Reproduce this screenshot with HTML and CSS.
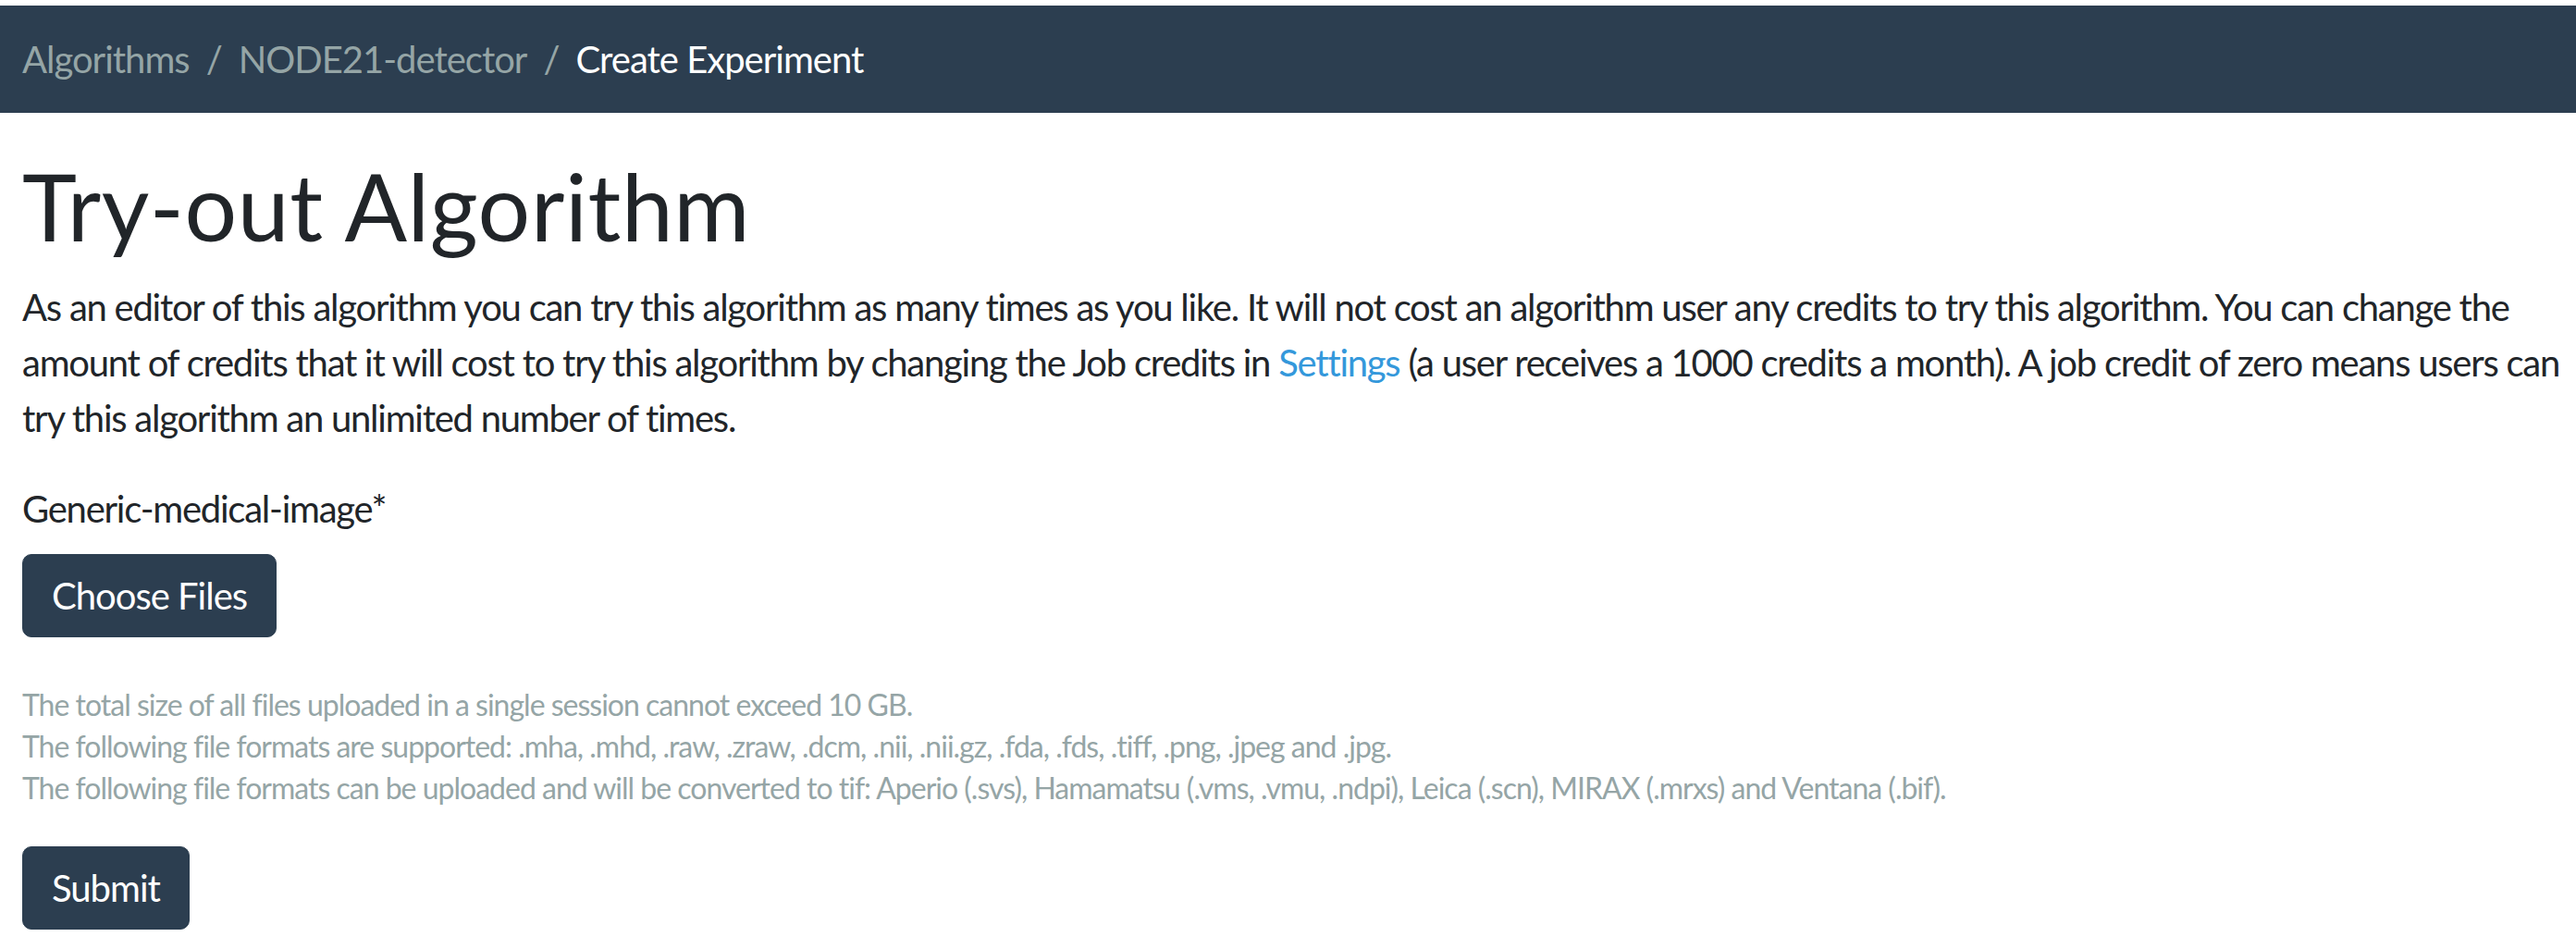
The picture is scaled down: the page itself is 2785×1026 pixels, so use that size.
FILE: index.html
```html
<!DOCTYPE html>
<html lang="en">
<head>
<meta charset="utf-8">
<title>Create Experiment</title>
<link rel="stylesheet" href="styles.css">
</head>
<body>
<nav class="breadcrumb-bar">
  <ol class="breadcrumb">
    <li class="crumb"><a href="#">Algorithms</a></li>
    <li class="crumb"><a href="#">NODE21-detector</a></li>
    <li class="crumb active">Create Experiment</li>
  </ol>
</nav>
<main class="container">
  <h1 class="title">Try-out Algorithm</h1>
  <p class="lead-text">As an editor of this algorithm you can try this algorithm as many times as you like. It will not cost an algorithm user any credits to try this algorithm. You can change the amount of credits that it will cost to try this algorithm by changing the Job credits in <a class="link" href="#">Settings</a> (a user receives a 1000 credits a month). A job credit of zero means users can try this algorithm an unlimited number of times.</p>
  <form class="form">
    <div class="field">
      <label class="label">Generic-medical-image*</label>
      <div><button type="button" class="btn">Choose Files</button></div>
      <div class="help">
        <div>The total size of all files uploaded in a single session cannot exceed 10 GB.</div>
        <div>The following file formats are supported: .mha, .mhd, .raw, .zraw, .dcm, .nii, .nii.gz, .fda, .fds, .tiff, .png, .jpeg and .jpg.</div>
        <div>The following file formats can be uploaded and will be converted to tif: Aperio (.svs), Hamamatsu (.vms, .vmu, .ndpi), Leica (.scn), MIRAX (.mrxs) and Ventana (.bif).</div>
      </div>
    </div>
    <button type="button" class="btn">Submit</button>
  </form>
</main>
</body>
</html>
```
FILE: styles.css
```css
html, body {
  margin: 0;
  padding: 0;
  background: #ffffff;
}
body {
  font-family: Lato, "Noto Sans", sans-serif;
  font-size: 40px;
  line-height: 1.5;
  letter-spacing: -1px;
  color: #212529;
  padding-top: 6px;
}
.breadcrumb-bar {
  background: #2c3e50;
  margin-bottom: 40px;
}
.breadcrumb {
  list-style: none;
  margin: 0;
  padding: 28px 24px;
  display: flex;
  flex-wrap: wrap;
}
.crumb a {
  color: #95a5a6;
  text-decoration: none;
}
.crumb + .crumb::before {
  content: "/";
  color: #95a5a6;
  padding: 0 18px;
}
.crumb.active {
  color: #ffffff;
}
.container {
  padding: 0 12px 0 24px;
}
.title {
  font-size: 100px;
  font-weight: 400;
  line-height: 1.2;
  letter-spacing: 0.6px;
  margin: 0 0 20px;
}
.lead-text {
  margin: 0 0 38px;
  letter-spacing: -1.25px;
}
.link {
  color: #3498db;
  text-decoration: none;
}
.label {
  display: inline-block;
  margin-bottom: 19px;
  letter-spacing: -1.25px;
}
.btn {
  font-family: inherit;
  font-size: 40px;
  line-height: 1.5;
  letter-spacing: -1px;
  color: #ffffff;
  background: #2c3e50;
  border: 1px solid #2c3e50;
  border-radius: 10px;
  padding: 14px 31px;
  cursor: pointer;
}
.help {
  margin-top: 51px;
  font-size: 32px;
  line-height: 1.4;
  color: #95a5a6;
}
.field {
  margin-bottom: 41px;
}
```
